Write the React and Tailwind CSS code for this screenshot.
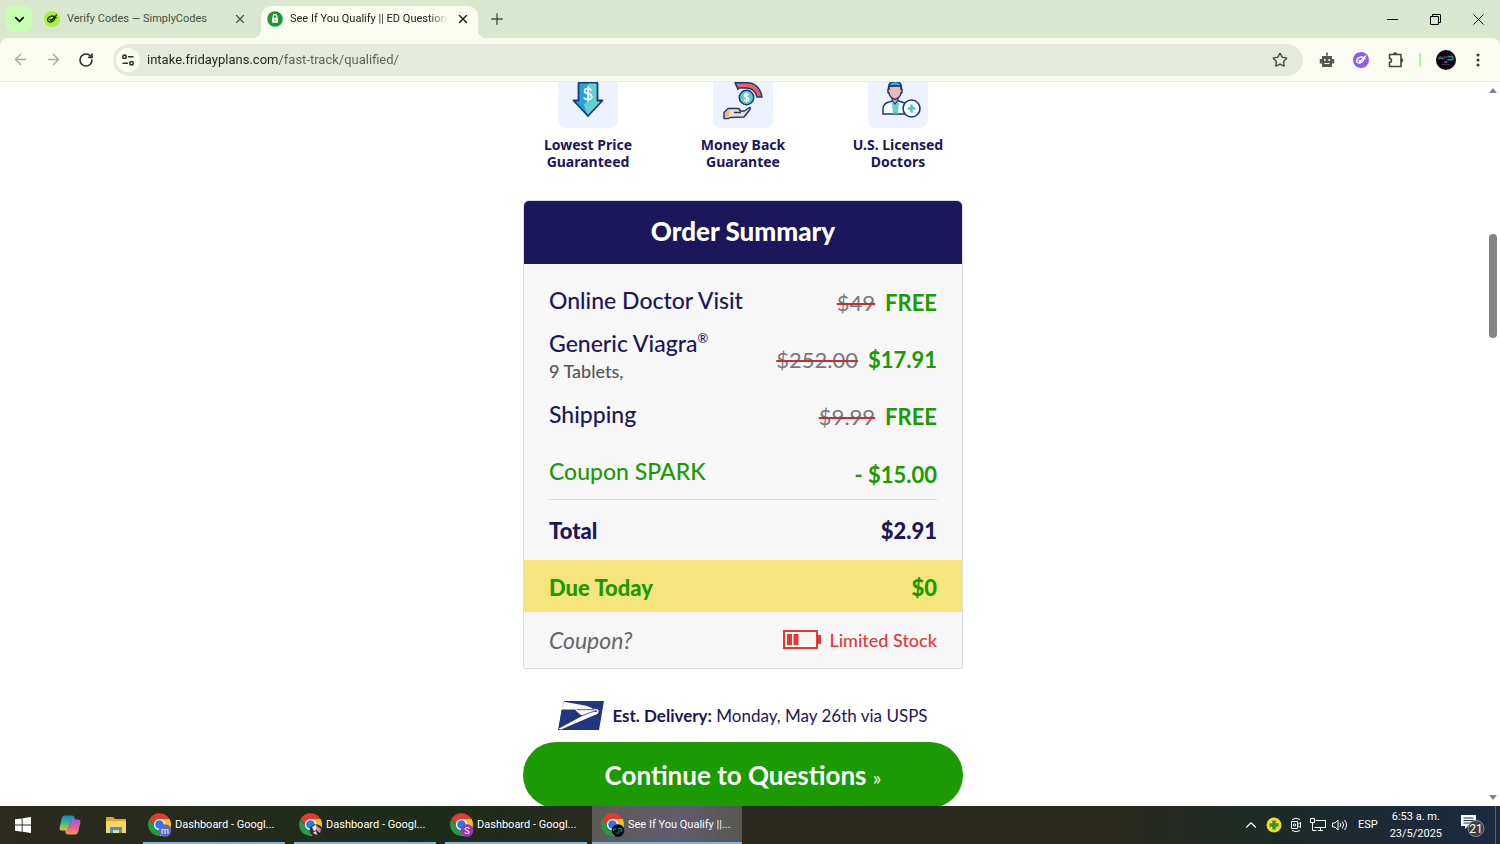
import { ArrowLeft, ArrowRight, ChevronDown, ChevronUp, Plus, RotateCw, Star, X } from 'lucide-react'

const features = [
  { icon: PriceIcon, lines: ['Lowest Price', 'Guaranteed'] },
  { icon: MoneyBackIcon, lines: ['Money Back', 'Guarantee'] },
  { icon: DoctorIcon, lines: ['U.S. Licensed', 'Doctors'] }
]

const taskbarWindows = [
  { title: 'Dashboard - Googl...', badge: 'm', color: '#5c6bc0' },
  { title: 'Dashboard - Googl...', badge: 'photo', color: '#2b2b2b' },
  { title: 'Dashboard - Googl...', badge: 'S', color: '#9c36b5' },
  { title: 'See If You Qualify ||...', badge: 'dark', color: '#08090d', active: true }
]

function LeafMark({ className, bg, fg }) {
  return (
    <svg viewBox="0 0 16 16" className={className} aria-hidden="true">
      <circle cx="8" cy="8" r="8" fill={bg} />
      <g fill="none" stroke={fg} strokeWidth="1.4" strokeLinecap="round" strokeLinejoin="round">
        <path d="M10.2 5.3C7.4 4.3 3.8 6.2 3.6 8.8c-.1 2.3 3 2.9 5.2 1.3 1.6-1.1 2-2.4 2-3.6" />
        <path d="M6 8.4l1.3 1.1 5.2-5.6" />
        <path d="M9.7 6.8h2.4" />
      </g>
    </svg>
  )
}

function LockFavicon() {
  return (
    <svg viewBox="0 0 16 16" className="size-4 shrink-0" aria-hidden="true">
      <circle cx="8" cy="8" r="7.8" fill="#1e9632" />
      <path d="M6.2 7V5.4a1.8 1.8 0 0 1 3.6 0V7" fill="none" stroke="#fff" strokeWidth="1.3" />
      <rect x="5" y="6.8" width="6" height="5" rx=".8" fill="#fff" />
      <path d="M8 8.3v1.8" stroke="#1e9632" strokeWidth="1" />
    </svg>
  )
}

function TuneIcon() {
  return (
    <svg viewBox="0 0 16 16" className="size-4" fill="none" stroke="#30352c" strokeWidth="1.6" aria-hidden="true">
      <circle cx="4.500" cy="4.8" r="1.7" />
      <path d="M8 4.800h5.500M2.500 11.200H8" />
      <circle cx="11.500" cy="11.2" r="1.7" />
    </svg>
  )
}

function RobotIcon() {
  return (
    <svg viewBox="0 0 16 16" className="size-4" aria-hidden="true">
      <path d="M8 1v4" stroke="#545a52" strokeWidth="1.2" />
      <circle cx="8" cy="1.4" r="1" fill="#545a52" />
      <path d="M3 4h10v3h2.2v4.5H13V15H3v-3.500H.8V7H3z" fill="#545a52" />
      <circle cx="5.8" cy="8" r="1" fill="#fafcf2" />
      <circle cx="10.200" cy="8" r="1" fill="#fafcf2" />
      <path d="M5.500 11.500h5" stroke="#fafcf2" strokeWidth="1" />
    </svg>
  )
}

function PuzzleIcon() {
  return (
    <svg viewBox="0 0 18 18" className="size-[18px]" aria-hidden="true">
      <path
        d="M2.500 3.500h11.500v12H2.500v-4.200c2.600-.2 2.600-3.600 0-3.800z"
        fill="none" stroke="#40483c" strokeWidth="1.600" strokeLinejoin="round"
      />
      <path d="M6 3.500a2.200 2.200 0 0 1 4.400 0zM14 7a2.200 2.200 0 0 1 0 4.400z" fill="#40483c" />
    </svg>
  )
}

function DarkAvatar({ className }) {
  return (
    <svg viewBox="0 0 20 20" className={className} aria-hidden="true">
      <circle cx="10" cy="10" r="10" fill="#08090d" />
      <g fill="none" strokeWidth="1">
        <path d="M3 9.500V7.200h3.500v2.300M3 8.500h3.500M8 9.500V7h3" stroke="#6b5f73" />
        <path d="M11.500 6.500h5.200v3.200h-5.200" stroke="#1d8f9c" strokeWidth="1.400" />
        <path d="M8.500 12h3" stroke="#7b3fe0" strokeWidth="1.800" />
        <path d="M6 14.500h8" stroke="#4b2a3c" />
      </g>
    </svg>
  )
}

function PriceIcon() {
  return (
    <svg viewBox="0 0 60 46" className="h-[46px] w-[60px]" aria-hidden="true">
      <path d="M21 .5h18v18h6L30 34.500 15 18.500h6z" fill="#29a3d6" />
      <path d="M30 .5h9v18h5L30 33.500 26 22.500l4-4z" fill="#66d0d0" />
      <path d="M22 .5h16q1.500 0 1.500 1.500v16.500h5L30 34 15.500 18.500h5V2Q20.500.5 22 .5z" fill="none" stroke="#173a78" strokeWidth="1.800" strokeLinejoin="round" />
      <path d="M33.500 8.500q-1-2-3.700-2-3.300 0-3.300 2.600 0 2.200 3.500 2.700 3.800.6 3.800 3 0 2.700-3.800 2.700-3 0-4-2.200M30 4.500v15" fill="none" stroke="#fff" strokeWidth="1.600" />
    </svg>
  )
}

function MoneyBackIcon() {
  return (
    <svg viewBox="0 0 60 46" className="h-[46px] w-[60px]" aria-hidden="true">
      <path d="M22 .8h12c8.500 0 13.500 6 15 14.200h-5C42.500 9.500 39 6 33 6h-7.500l-.5 1.500z" fill="#e8615f" stroke="#173a78" strokeWidth="1.500" strokeLinejoin="round" />
      <circle cx="33.500" cy="15.500" r="7.200" fill="#62cdd0" stroke="#173a78" strokeWidth="1.500" />
      <path d="M35.600 13q-.8-1-2.200-1-2 0-2 1.600 0 1.300 2.100 1.700 2.300.3 2.300 1.900 0 1.700-2.300 1.700-1.700 0-2.400-1.200M33.500 10.500v10" fill="none" stroke="#fff" strokeWidth="1.300" />
      <path d="M11 35.500v-5l4-4h9.500q2.500 0 2.500 2.500h4.500l5-3.500q1.500.5 0 2.500L31 35l-14 .5-1.500 1H11z" fill="#f8dac8" stroke="#173a78" strokeWidth="1.500" strokeLinejoin="round" />
      <path d="M12 31l4-3.500v6.500l-4 2z" fill="#f5b56f" />
      <path d="M21 30.500h7" stroke="#173a78" strokeWidth="1.500" />
    </svg>
  )
}

function DoctorIcon() {
  return (
    <svg viewBox="0 0 60 46" className="h-[46px] w-[60px]" aria-hidden="true">
      <path d="M15 32v-5q0-5.500 6-7l5-1.500h3l5 1.500q4 1 5 4v8z" fill="#fff" stroke="#173a78" strokeWidth="1.500" />
      <path d="M23.500 20.500h7.500L30 31.500h-5z" fill="#69cfcf" />
      <path d="M24 18l3 4 3-4v-3h-6z" fill="#e8b7b0" stroke="#173a78" strokeWidth="1.200" />
      <path d="M21 4h12v3l1 .5v3l-1 .5q-.5 4.500-6 6.500-5.500-2-6-6.500l-1-.5v-3l1-.5z" fill="#edbbb5" stroke="#173a78" strokeWidth="1.500" />
      <path d="M20.500 5.500q0-6 6.500-6t6.500 6q-1-1.700-3-1.700h-7q-2 0-3 1.700z" fill="#36a9cf" stroke="#173a78" strokeWidth="1.500" />
      <circle cx="43.500" cy="26.500" r="8.500" fill="#fff" stroke="#173a78" strokeWidth="1.600" />
      <path d="M43.500 22.500v8M39.500 26.500h8" stroke="#55c7c3" strokeWidth="2.600" />
    </svg>
  )
}

function BatteryIcon() {
  return (
    <svg viewBox="0 0 38 20" className="h-5 w-[38px]" aria-hidden="true">
      <path d="M1 1h33v17H1z" fill="none" stroke="#e53935" strokeWidth="2" />
      <path d="M4 4h5v11H4zM10.500 4h5v11h-5zM35 5h3v9h-3z" fill="#e53935" />
    </svg>
  )
}

function UspsLogo() {
  return (
    <svg viewBox="0 0 46 29" className="h-[29px] w-[46px]" aria-hidden="true">
      <path d="M6 0h40l-5 29H0L4 7.500z" fill="#22357f" />
      <path d="M6 .8L27 4.500c4 .7 6 2 7.500 3.200 2.500 0 5 .2 5.800 1.200.8 1.200 0 3.300-1.200 4.100-.8.6-2 1-3.500 1.600L3 28.500l-2.500-.8L24 15 17 9H3.500z" fill="#fff" />
      <path d="M3.700 8.500h13.600l3.200 8L.8 27z" fill="#22357f" />
      <path d="M22 15.500l11-4.300c2-.7 4-.9 6-.7M18.500 8.700h14.500c3 0 5.500.4 5.800 1.500" fill="none" stroke="#22357f" strokeWidth=".8" />
    </svg>
  )
}

function ChromeIcon({ badge, color }) {
  return (
    <svg viewBox="0 0 24 24" className="size-6 shrink-0" aria-hidden="true">
      <path d="M1.500 6A11.500 11.500 0 0 1 21.500 6H11.500L7 14z" fill="#e33b2e" />
      <path d="M21.600 6a11.500 11.500 0 0 1-10 17l5.400-10-5-7z" fill="#fbc116" />
      <path d="M1.400 6.200a11.500 11.500 0 0 0 10.200 16.800l5-8.500-9.200 0z" fill="#279847" />
      <circle cx="11.500" cy="11.500" r="5.600" fill="#fff" />
      <circle cx="11.500" cy="11.500" r="4.300" fill="#2979e8" />
      <circle cx="17" cy="17.500" r="6.300" fill={color} />
      {badge.length === 1 && (
        <text x="17" y="20.500" textAnchor="middle" fontSize="9" fill="#fff">{badge}</text>
      )}
      {badge === 'photo' && (
        <>
          <path d="M13 14l4-2.500 1 4-3 3z" fill="#f4eef2" />
          <path d="M18 13l4 3-1 4-4-3z" fill="#d982bd" />
          <path d="M14 20l3-2 1 4z" fill="#efe6ee" />
        </>
      )}
      {badge === 'dark' && (
        <path d="M12.500 18v-2h3M17 15.500h4v2.500h-4M15.500 20h3" fill="none" stroke="#2b8490" strokeWidth="1" />
      )}
    </svg>
  )
}

function TabStrip() {
  return (
    <header className="flex h-[38px] shrink-0 items-end bg-[#d9e7cf] text-[#45503f]">
      <button aria-label="Search tabs" className="mb-1.5 ml-1.5 flex size-[26px] items-center justify-center rounded-lg bg-[#c7ffb3] text-black">
        <ChevronDown size={15} strokeWidth={2.500} />
      </button>
      <div className="ml-3 flex h-8 w-[209px] items-center pb-1.5">
        <LeafMark className="size-4 shrink-0" bg="#a6f23a" fg="#1d3310" />
        <span className="ml-[7px] flex-1 whitespace-nowrap">Verify Codes — SimplyCodes</span>
        <button aria-label="Close tab" className="mr-1.5"><X size={14} strokeWidth={2} /></button>
      </div>
      <span className="size-2 bg-[radial-gradient(circle_at_0_0,transparent_8px,#fafcf2_8px)]" />
      <div className="flex h-8 w-[217px] items-center rounded-t-[10px] bg-[#fafcf2] pb-1.5 pl-1.5 text-[#20251d]">
        <LockFavicon />
        <span className="ml-[7px] w-[158px] overflow-hidden whitespace-nowrap [mask-image:linear-gradient(to_right,black_88%,transparent)]">
          See If You Qualify || ED Question
        </span>
        <button aria-label="Close tab" className="ml-2"><X size={14} strokeWidth={2.500} /></button>
      </div>
      <span className="size-2 bg-[radial-gradient(circle_at_100%_0,transparent_8px,#fafcf2_8px)]" />
      <button aria-label="New tab" className="mb-2.5 ml-0.5"><Plus size={18} strokeWidth={1.800} /></button>
      <div className="mr-4 mb-[13px] ml-auto flex items-center gap-8 text-black">
        <button aria-label="Minimize" className="flex h-3 w-[11px] items-center">
          <span className="block h-px w-full bg-black" />
        </button>
        <button aria-label="Restore">
          <svg viewBox="0 0 11 11" className="size-[11px]" fill="none" stroke="currentColor">
            <path d="M.5 2.500h8v8h-8zM2.500 2.500v-2h8v8h-2" />
          </svg>
        </button>
        <button aria-label="Close">
          <svg viewBox="0 0 11 11" className="size-[11px]" fill="none" stroke="currentColor">
            <path d="M.5.5l10 10M10.500.5l-10 10" />
          </svg>
        </button>
      </div>
    </header>
  )
}

function Toolbar() {
  return (
    <div className="shrink-0 bg-[#d9e7cf]">
      <div className="flex h-11 items-center rounded-t-lg border-b border-[#e6ebdd] bg-[#fafcf2] pr-[15px]">
        <div className="ml-3 flex items-center gap-4">
          <button aria-label="Back" className="text-[#a5aaa0]"><ArrowLeft size={17} strokeWidth={2} /></button>
          <button aria-label="Forward" className="text-[#a5aaa0]"><ArrowRight size={17} strokeWidth={2} /></button>
          <button aria-label="Reload" className="text-[#30352c]"><RotateCw size={16} strokeWidth={2.500} /></button>
        </div>
        <label className="ml-[19px] flex h-8 flex-1 items-center rounded-full bg-[#e5ebdc] pr-[15px] pl-[3px]">
          <span className="flex size-6 items-center justify-center rounded-full bg-[#fafcf2]"><TuneIcon /></span>
          <span className="ml-[7px] flex-1 text-[13px]">
            <input
              aria-label="Address"
              defaultValue="intake.fridayplans.com/fast-track/qualified/"
              className="w-full bg-transparent bg-[linear-gradient(to_right,#20251d_131px,#596054_131px)] bg-clip-text text-transparent outline-none"
            />
          </span>
          <Star size={16} strokeWidth={2} className="text-[#40483c]" />
        </label>
        <div className="ml-4 flex items-center gap-[18px]">
          <RobotIcon />
          <LeafMark className="size-4" bg="#8b5cf0" fg="#fff" />
          <PuzzleIcon />
        </div>
        <div className="ml-3.5 flex items-center gap-[15px]">
          <span className="h-3.5 w-0.5 bg-[#bdf0a9]" />
          <DarkAvatar className="size-5" />
          <svg viewBox="0 0 14 16" className="h-4 w-3.5" fill="#30352c">
            <circle cx="7" cy="3" r="1.500" /><circle cx="7" cy="8" r="1.500" /><circle cx="7" cy="13" r="1.500" />
          </svg>
        </div>
      </div>
    </div>
  )
}

function SummaryRow({ label, note, was, price }) {
  return (
    <div className="flex h-[57px] items-center justify-between last:h-[54px] last:pt-1">
      <dt className="pb-1.5 leading-7 font-medium">
        {label}
        {note && <span className="block text-[18px] text-[#555]">{note}</span>}
      </dt>
      <dd className="flex items-center gap-2.5 text-[22px]">
        {was && <s className="text-[#77787c] decoration-[#c62f36] decoration-2">{was}</s>}
        <strong className="text-[#1b9a02]">{price}</strong>
      </dd>
    </div>
  )
}

function OrderSummary() {
  return (
    <section className="mt-[30px] overflow-hidden rounded-t-md border border-[#dcdcdf] bg-[#f7f7f7] text-[23px] text-[#1c165a]">
      <h2 className="flex h-[63px] items-center justify-center bg-[#1c165a] pb-0.5 text-[26px] font-black text-white">Order Summary</h2>
      <dl>
        <div className="mx-[25px] border-b border-[#dcdcdf] pt-2.5">
          <SummaryRow label="Online Doctor Visit" was="$49" price="FREE" />
          <SummaryRow
            label={<>Generic Viagra<sup className="top-0 align-super text-[13px] leading-none">®</sup></>}
            note="9 Tablets,"
            was="$252.00"
            price="$17.91"
          />
          <SummaryRow label="Shipping" was="$9.99" price="FREE" />
          <SummaryRow label={<span className="text-[#1b9a02]">Coupon SPARK</span>} price="- $15.00" />
        </div>
        <div className="mx-[25px] flex h-[60px] items-center justify-between text-[22px] font-black">
          <dt>Total</dt>
          <dd>$2.91</dd>
        </div>
        <div className="flex h-[52px] items-center justify-between bg-[#f5e57c] px-[25px] pt-0.5 text-[22px] font-black text-[#1b9a02]">
          <dt>Due Today</dt>
          <dd>$0</dd>
        </div>
      </dl>
      <div className="mx-[25px] flex h-14 items-center justify-between">
        <button className="text-[#666] italic">Coupon?</button>
        <p className="flex items-center gap-2 text-[18px] font-medium text-[#e53935]"><BatteryIcon />Limited Stock</p>
      </div>
    </section>
  )
}

function Taskbar() {
  return (
    <footer className="flex h-[38px] shrink-0 items-center bg-[linear-gradient(to_right,#2d2a20,#1d2c19_28%,#2c2a20_45%,#29291f_75%,#1c2b28_86%,#1b2a42)] text-white">
      <button aria-label="Start" className="ml-[15px]">
        <svg viewBox="0 0 16 16" className="size-4" fill="#fff">
          <path d="M0 2.300L6.700 1.400v6.200H0zM7.600 1.300L16 .1v7.500H7.600zM0 8.400h6.700v6.300L0 13.700zM7.600 8.400H16V16l-8.400-1.200z" />
        </svg>
      </button>
      <button aria-label="Copilot" className="ml-7">
        <svg viewBox="0 0 22 20" className="h-5 w-[22px]">
          <defs>
            <linearGradient id="cpLeft" x1="0" y1="0" x2="0" y2="1">
              <stop offset="0" stopColor="#1684d8" /><stop offset=".5" stopColor="#38b98a" /><stop offset="1" stopColor="#e5c824" />
            </linearGradient>
            <linearGradient id="cpRight" x1="0" y1="0" x2="0" y2="1">
              <stop offset="0" stopColor="#a35be0" /><stop offset=".5" stopColor="#ea5a9a" /><stop offset="1" stopColor="#f79a55" />
            </linearGradient>
          </defs>
          <path d="M6 .5h7q2 0 2.500 2L16 5h-2q-2 0-2.800 2.500L9 14q-.8 1.500-2.500 1.500H3q-3 0-2.300-3.500l2-8.500Q3.500.5 6 .5z" fill="url(#cpLeft)" />
          <path d="M16 19.500H9q-2 0-2.500-2L6 15.500q2.500 0 3.500-2.500l2-6Q12.300 4.500 14 4.500h5q3 0 2.300 3.500l-2 8.500q-.8 3-3.300 3z" fill="url(#cpRight)" />
        </svg>
      </button>
      <button aria-label="File Explorer" className="ml-[25px]">
        <svg viewBox="0 0 20 18" className="h-[18px] w-5">
          <path d="M0 1h7l2 2h11v5H0z" fill="#e3a52c" />
          <path d="M0 5h20v12H0z" fill="#fbd567" />
          <path d="M4 17v-6h12v6h-3v-3H7v3z" fill="#3a93d2" />
        </svg>
      </button>
      <nav className="ml-[13px] flex h-full gap-px">
        {taskbarWindows.map((win, i) => (
          <button
            key={i}
            className={`flex h-full w-[150px] ${win.active ? 'bg-[linear-gradient(to_right,#5d5c58,#615c70_60%,#57564f)]' : 'px-1'}`}
          >
            <span className={`flex h-full w-full items-center gap-[3px] border-b-2 border-[#76b9ed] pt-0.5 whitespace-nowrap ${win.active ? 'pl-[9px]' : 'pl-[5px]'}`}>
              <ChromeIcon badge={win.badge} color={win.color} />
              {win.title}
            </span>
          </button>
        ))}
      </nav>
      <div className="ml-auto flex items-center gap-1.5">
        <ChevronUp size={18} strokeWidth={1.500} />
        <svg viewBox="0 0 16 16" className="size-4">
          <circle cx="8" cy="8" r="7.500" fill="#f3d92b" />
          <path d="M8 3.500v9M3.500 8h9" stroke="#2f9a2c" strokeWidth="3.500" />
        </svg>
        <svg viewBox="0 0 16 16" className="size-4" fill="none" stroke="#fff">
          <path d="M4 2.500q4-2.500 8 0M4 13.500q4 2.500 8 0M3.500 4.500h6v7h-6zM9.500 7.500l3-2v5l-3-2" />
          <circle cx="6.500" cy="8" r="1.200" />
        </svg>
        <svg viewBox="0 0 16 16" className="size-4" fill="none" stroke="#fff">
          <path d="M5.500 3.500h10v7h-11M8 13.500h5M10.500 10.500v3M.5 1.500h4v4h-4zM2.500 5.500v8h4" />
        </svg>
        <svg viewBox="0 0 16 16" className="size-4" fill="none" stroke="#fff">
          <path d="M.5 6h2.500l3-3v10l-3-3H.5zM8 6q1.500 2 0 4M10.200 4.500q3 3.500 0 7M12.500 3q4 5 0 10" />
        </svg>
      </div>
      <span className="ml-2.5">ESP</span>
      <div className="ml-3 text-center leading-[17px]">
        <p>6:53 a. m.</p>
        <p>23/5/2025</p>
      </div>
      <button aria-label="Notifications" className="ml-[18px]">
        <svg viewBox="0 0 26 24" className="h-6 w-[26px]">
          <path d="M1 2h15v11H8l-3 3v-3H1z" fill="#fff" />
          <path d="M3.500 5h10M3.500 7.500h10M3.500 10h7" stroke="#1b2a42" />
          <circle cx="16" cy="15.500" r="8" fill="#3a3e45" stroke="#8a8d92" />
          <text x="16" y="19.500" textAnchor="middle" fontSize="12" fill="#fff">21</text>
        </svg>
      </button>
      <span className="mr-1 ml-[9px] h-full w-px bg-[#57647a]" />
    </footer>
  )
}

export default function App() {
  return (
    <div className="flex h-screen flex-col bg-white font-['Roboto',sans-serif] text-[11px]">
      <TabStrip />
      <Toolbar />
      <div className="flex min-h-0 flex-1">
        <main className="min-w-0 flex-1 overflow-hidden font-['Lato',sans-serif]">
          <div className="mx-auto w-[440px]">
            <ul className="flex justify-between px-[11px]">
              {features.map(({ icon: Icon, lines }) => (
                <li key={lines[0]} className="flex w-[108px] flex-col items-center">
                  <span className="rounded-b-lg bg-[#eef2fe]"><Icon /></span>
                  <p className="mt-2 text-center font-['Noto_Sans',sans-serif] text-sm leading-[17px] font-bold whitespace-nowrap text-[#1c165a]">
                    {lines[0]}<br />{lines[1]}
                  </p>
                </li>
              ))}
            </ul>
            <OrderSummary />
            <p className="mt-8 flex items-center justify-center gap-2 text-[17px] leading-6 text-[#1c165a]">
              <UspsLogo />
              <span><strong>Est. Delivery:</strong> Monday, May 26th via USPS</span>
            </p>
            <button className="mt-3 h-[66px] w-full rounded-full bg-[#1b9a02] text-[26px] font-bold text-white">
              Continue to Questions <span className="text-xl font-normal">»</span>
            </button>
          </div>
        </main>
        <div className="flex w-[14px] shrink-0 flex-col items-center justify-between py-1.5" aria-hidden="true">
          <span className="border-x-4 border-b-[5px] border-x-transparent border-b-[#858585]" />
          <span className="mb-[317px] h-[104px] w-2 rounded-full bg-[#858585]" />
          <span className="border-x-4 border-t-[5px] border-x-transparent border-t-[#858585]" />
        </div>
      </div>
      <Taskbar />
    </div>
  )
}
